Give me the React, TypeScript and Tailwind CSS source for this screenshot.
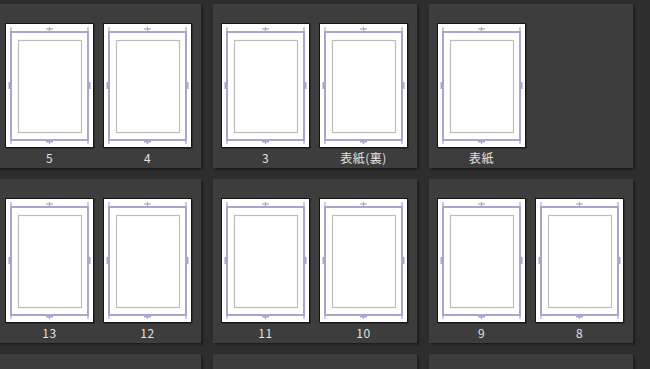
const rows: string[][][] = [
  [['5', '4'], ['3', '表紙(裏)'], ['表紙']],
  [['13', '12'], ['11', '10'], ['9', '8']],
  [[], [], []],
]

function PageSheet() {
  const lav = '#a9a5cb'
  return (
    <div className="w-[89px] h-[125px] border border-[#151515] bg-white shadow-[1px_1px_0_rgba(0,0,0,0.25)]">
      <svg width="87" height="123" viewBox="0 0 87 123" className="block">
        {/* trim frame */}
        <rect x="5" y="8" width="77" height="108" fill="none" stroke={lav} strokeWidth="2" />
        {/* corner ticks */}
        <line x1="5" y1="3" x2="5" y2="120" stroke={lav} strokeWidth="1.2" />
        <line x1="82" y1="3" x2="82" y2="120" stroke={lav} strokeWidth="1.2" />
        {/* top / bottom center marks */}
        <line x1="40" y1="5" x2="47" y2="5" stroke={lav} strokeWidth="1.2" />
        <line x1="43.5" y1="3" x2="43.5" y2="8" stroke={lav} strokeWidth="1.2" />
        <line x1="40" y1="117.5" x2="47" y2="117.5" stroke={lav} strokeWidth="2" />
        <line x1="43.5" y1="116" x2="43.5" y2="120" stroke={lav} strokeWidth="1.2" />
        {/* side center marks */}
        <line x1="3.5" y1="58" x2="3.5" y2="65" stroke={lav} strokeWidth="2" />
        <line x1="83.5" y1="58" x2="83.5" y2="65" stroke={lav} strokeWidth="2" />
        {/* inner frame */}
        <rect x="12.5" y="16.5" width="63" height="92" fill="none" stroke="#bdbdbd" strokeWidth="1.2" />
      </svg>
    </div>
  )
}

function Spread({ pages }: { pages: string[] }) {
  return (
    <div className="w-[204px] h-[164px] shrink-0 bg-[#3d3d3d] shadow-[2px_2px_2px_rgba(0,0,0,0.35)] pl-[8px] pt-[19px] flex gap-[9px]">
      {pages.map((label) => (
        <div key={label} className="flex flex-col items-center">
          <PageSheet />
          <div className="mt-[3px] h-[14px] leading-[14px] text-[12px] tracking-[0.5px] text-[#e2e2e2] font-['Noto_Sans_CJK_JP',sans-serif]">
            {label}
          </div>
        </div>
      ))}
    </div>
  )
}

export default function App() {
  return (
    <div className="w-[650px] h-[369px] overflow-hidden bg-[#2d2d2d]">
      <div className="ml-[-3px] pt-[4px] flex flex-col gap-[11px]">
        {rows.map((row, i) => (
          <div key={i} className="flex gap-3">
            {row.map((pages, j) => (
              <Spread key={j} pages={pages} />
            ))}
          </div>
        ))}
      </div>
    </div>
  )
}
